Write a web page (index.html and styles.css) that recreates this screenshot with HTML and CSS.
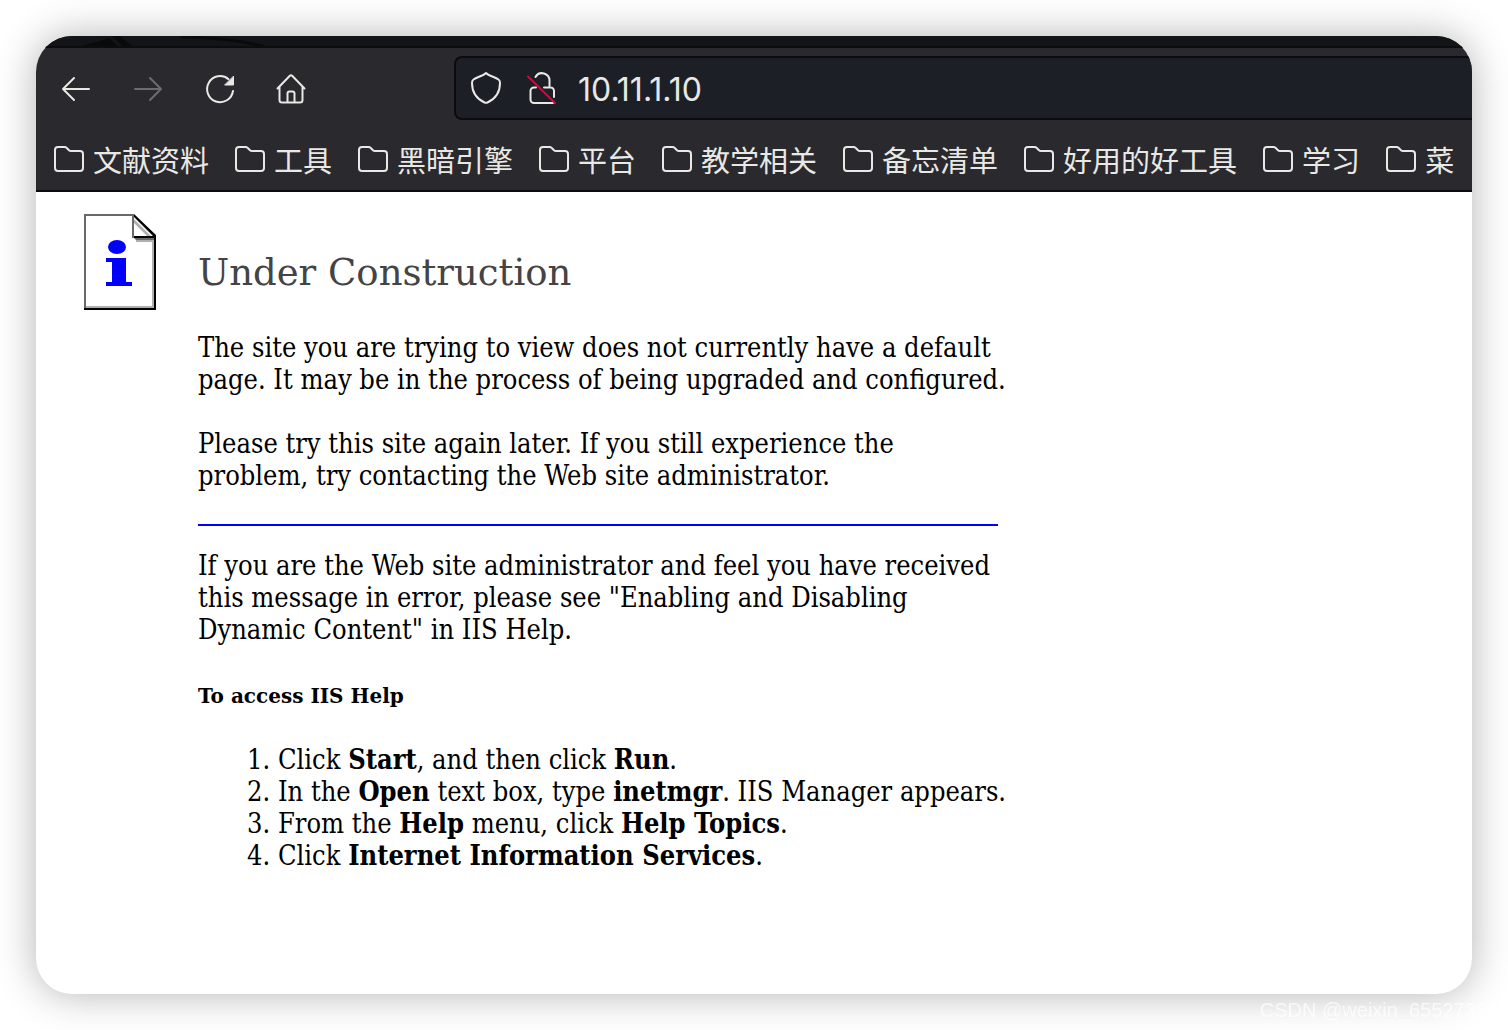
FILE: index.html
```html
<!DOCTYPE html>
<html lang="en">
<head>
<meta charset="utf-8">
<meta name="viewport" content="width=device-width, initial-scale=1">
<title>Under Construction</title>
<link rel="stylesheet" href="styles.css">
</head>
<body>
<svg class="defs" aria-hidden="true">
  <symbol id="folder" viewBox="0 0 32 28">
    <path d="M2 5a3 3 0 0 1 3-3h6.500a3 3 0 0 1 2 .8L16 5.200a3 3 0 0 0 2 .8h9a3 3 0 0 1 3 3v14a3 3 0 0 1-3 3H5a3 3 0 0 1-3-3z"/>
  </symbol>
</svg>
<div class="window">
  <header class="chrome">
    <div class="tabstrip">
      <svg width="260" height="10" viewBox="0 0 260 10" aria-hidden="true">
        <path d="M22 10L50 2L58 10zM52 0h8l12 10h-10z" fill="#090a0c"/>
        <path d="M122 1Q170 2 202 10" fill="none" stroke="#090a0c" stroke-width="3"/>
      </svg>
    </div>
    <div class="toolbar">
      <nav class="nav" aria-label="Navigation">
        <button class="tool" aria-label="Back"><svg viewBox="0 0 32 32"><path d="M29 16H3M14 5L3 16l11 11"/></svg></button>
        <button class="tool" aria-label="Forward" disabled><svg viewBox="0 0 32 32"><path d="M3 16h26M18 5L29 16 18 27"/></svg></button>
        <button class="tool" aria-label="Reload"><svg viewBox="0 0 32 32"><path d="M29 18A13 13 0 1 1 24.500 6.200"/><path class="solid" d="M29.500 3.500v8.500H21z"/></svg></button>
        <button class="tool" aria-label="Home"><svg viewBox="0 0 32 32"><path d="M1.500 15.500L13.600 3a2 2 0 0 1 2.800 0L28.500 15.500M3.500 14V27a2.500 2.500 0 0 0 2.500 2.500h18a2.500 2.500 0 0 0 2.500-2.500V14M11.500 29V20.500a2 2 0 0 1 2-2h3a2 2 0 0 1 2 2V29"/></svg></button>
      </nav>
      <div class="address">
        <svg viewBox="0 0 32 34" aria-hidden="true"><path d="M16 2C13 5 7 6 3.500 8.500Q2 9.500 2 12C2 21 7 28 14.500 31.500Q16 32.200 17.500 31.500C25 28 30 21 30 12Q30 9.500 28.500 8.500C25 6 19 5 16 2z"/></svg>
        <svg viewBox="0 0 32 34" aria-hidden="true"><path d="M9.500 6a7.500 7.500 0 0 1 14 4v6M10 16.500H8A3.500 3.500 0 0 0 4.500 20v8.500A3.500 3.500 0 0 0 8 32h19M18 16.500h6.500a3.500 3.500 0 0 1 3.500 3.500v6"/><path class="slash" d="M2 5.500L29 32"/></svg>
        <input class="url" type="text" value="10.11.1.10" aria-label="Address" spellcheck="false">
      </div>
    </div>
    <nav class="bookmarks" aria-label="Bookmarks" lang="zh-CN">
      <button class="bookmark"><svg><use href="#folder"/></svg>文献资料</button>
      <button class="bookmark"><svg><use href="#folder"/></svg>工具</button>
      <button class="bookmark"><svg><use href="#folder"/></svg>黑暗引擎</button>
      <button class="bookmark"><svg><use href="#folder"/></svg>平台</button>
      <button class="bookmark"><svg><use href="#folder"/></svg>教学相关</button>
      <button class="bookmark"><svg><use href="#folder"/></svg>备忘清单</button>
      <button class="bookmark"><svg><use href="#folder"/></svg>好用的好工具</button>
      <button class="bookmark"><svg><use href="#folder"/></svg>学习</button>
      <button class="bookmark"><svg><use href="#folder"/></svg>菜</button>
    </nav>
  </header>
  <main class="page">
    <svg class="info" viewBox="0 0 72 96" role="img" aria-label="Information">
      <path d="M0 0h50v2H2v94H0z" fill="#696969"/>
      <path d="M2 92h66V28h2v66H2z" fill="#b0b0b0"/>
      <path d="M0 94h70V24h2v72H0z" fill="#000"/>
      <path d="M50 24h20v2H52z" fill="#696969"/>
      <path d="M52 26h18v2H52z" fill="#b0b0b0"/>
      <path d="M50 5l17 17h-4L50 9z" fill="#b0b0b0"/>
      <path d="M48 0h2v24h-2z" fill="#696969"/>
      <path d="M50 22h22v2H50zM50 3l19 19h3v-1L50 0z" fill="#000"/>
      <ellipse cx="33" cy="33" rx="9" ry="7" fill="#00f"/>
      <path d="M22 44h20v24h6v4H22v-4h6V48h-6z" fill="#00f"/>
    </svg>
    <article class="article">
      <h1>Under Construction</h1>
      <p>The site you are trying to view does not currently have a default page. It may be in the process of being upgraded and configured.</p>
      <p>Please try this site again later. If you still experience the problem, try contacting the Web site administrator.</p>
      <hr>
      <p>If you are the Web site administrator and feel you have received this message in error, please see "Enabling and Disabling Dynamic Content" in IIS Help.</p>
      <h2>To access IIS Help</h2>
      <ol>
        <li>Click <b>Start</b>, and then click <b>Run</b>.</li>
        <li>In the <b>Open</b> text box, type <b>inetmgr</b>. IIS Manager appears.</li>
        <li>From the <b>Help</b> menu, click <b>Help Topics</b>.</li>
        <li>Click <b>Internet Information Services</b>.</li>
      </ol>
    </article>
  </main>
</div>
<div class="watermark">CSDN @weixin_65527369</div>
</body>
</html>
```
FILE: styles.css
```css
* { box-sizing: border-box; }

body {
  margin: 0;
  min-height: 100vh;
  padding: 36px;
  display: flex;
  background: #fff;
  overflow: hidden;
}

.defs { position: absolute; width: 0; height: 0; }

.window {
  flex: 1;
  min-width: 0;
  border-radius: 36px;
  overflow: hidden;
  background: #fff;
  box-shadow: 0 0 40px rgba(0, 0, 0, 0.3);
}

.chrome {
  background: #29292e;
  border-bottom: 2px solid #0c0c0f;
}

.chrome svg {
  flex: none;
  fill: none;
  stroke: #e8e8e4;
  stroke-width: 2;
  stroke-linecap: round;
  stroke-linejoin: round;
}

.chrome .tabstrip svg { stroke: none; display: block; margin-left: 24px; }
.chrome .solid { fill: #e8e8e4; stroke-width: 1; }
.chrome .slash { stroke: #e4003a; }

.tabstrip {
  height: 12px;
  background: #121417;
  border-bottom: 2px solid #0c0c0f;
}

.toolbar {
  display: flex;
  align-items: center;
  padding: 8px 0 8px 24px;
}

.nav {
  flex: none;
  display: flex;
  gap: 40px;
  width: 394px;
  padding-top: 2px;
}

button {
  padding: 0;
  border: 0;
  background: none;
  color: #e8e8e4;
}

.tool { width: 32px; height: 32px; }
.tool svg { display: block; width: 32px; height: 32px; }
.tool:disabled { opacity: 0.35; }

.address {
  flex: 1;
  min-width: 0;
  height: 64px;
  display: flex;
  align-items: center;
  gap: 24px;
  padding-left: 14px;
  background: #1d1f27;
  border: 2px solid #0c0c0f;
  border-right: 0;
  border-radius: 8px 0 0 8px;
}

.address svg { width: 32px; height: 34px; }

.url {
  flex: 1;
  min-width: 0;
  margin-left: -4px;
  padding: 4px 0 0;
  border: 0;
  outline: 0;
  background: none;
  color: #e8e8e4;
  font: 32px/40px Inter, "Noto Sans", sans-serif;
}

.bookmarks {
  display: flex;
  gap: 25px;
  height: 62px;
  padding: 0 17px;
  overflow: hidden;
}

.bookmark {
  flex: none;
  display: flex;
  align-items: center;
  gap: 8px;
  font: 29px/40px "Noto Sans CJK SC", sans-serif;
}

.bookmark svg { width: 32px; height: 28px; }

.page {
  display: flex;
  align-items: flex-start;
  gap: 42px;
  padding: 22px 48px;
}

.info { flex: none; width: 72px; height: 96px; }

.article {
  width: 810px;
  font: 27px/32px "DejaVu Serif Condensed", "DejaVu Serif", serif;
  color: #000;
}

h1 {
  margin: 35px 0;
  font: 37px/48px "DejaVu Serif", serif;
  color: #444;
}

p { margin: 0 0 32px; }

hr {
  width: 800px;
  margin: 0 0 24px;
  border: 0;
  border-top: 2px solid #00f;
}

h2 {
  margin: 34px 0 32px;
  font: bold 20px/32px "DejaVu Serif", serif;
}

ol { margin: 0; padding-left: 80px; }

.watermark {
  position: fixed;
  right: 10px;
  bottom: 8px;
  color: rgba(255, 255, 255, 0.7);
  font: 20px/24px "Liberation Sans", sans-serif;
}
```
